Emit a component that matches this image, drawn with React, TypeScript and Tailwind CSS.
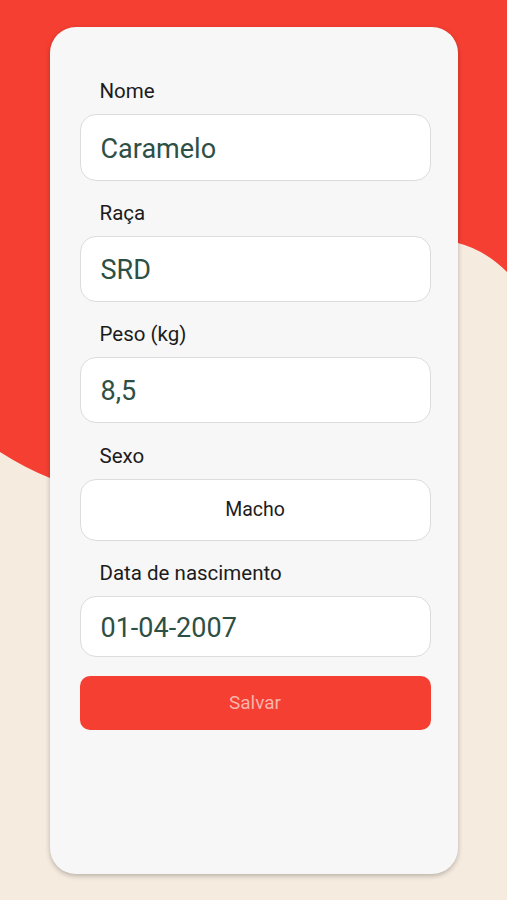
import React from "react";

const font = { fontFamily: "Roboto, 'Noto Sans', sans-serif" };

interface FieldProps {
  label: string;
  value: string;
  boxClass: string;
  center?: boolean;
}

const Field = ({ label, value, boxClass, center }: FieldProps) => {
  return (
    <div className="flex flex-col">
      <label className="ml-5 mb-[11px] text-[20.5px] leading-6 text-[#1c1c1c]">
        {label}
      </label>
      <div
        className={`flex items-center rounded-2xl border border-[#dcdcdc] bg-white ${boxClass} ${
          center ? "justify-center" : "px-5"
        }`}
      >
        {center ? (
          <span className="text-[19.5px] text-[#1c1c1c]">{value}</span>
        ) : (
          <span className="mt-[3px] text-[27px] text-[#2e4f45]">{value}</span>
        )}
      </div>
    </div>
  );
};

export default function App() {
  return (
    <div
      className="relative h-[900px] w-full overflow-hidden bg-[#f6ebdf]"
      style={font}
    >
      <svg
        className="absolute inset-0 h-full w-full"
        viewBox="0 0 507 900"
        preserveAspectRatio="none"
      >
        <path
          d="M0 0 H507 V272 Q485 250 458 243 C380 225 200 330 50 478 Q25 468 0 452 Z"
          fill="#f53f32"
        />
      </svg>
      <div className="relative flex justify-center pt-[27px]">
        <div className="flex h-[847px] w-[408px] flex-col gap-5 rounded-[26px] bg-[#f7f7f7] pl-[30px] pr-[27px] pt-[52px] shadow-[0_2px_5px_rgba(0,0,0,0.25)]">
          <Field label="Nome" value="Caramelo" boxClass="h-[67px]" />
          <Field label="Raça" value="SRD" boxClass="h-[66px]" />
          <Field label="Peso (kg)" value="8,5" boxClass="h-[66px]" />
          <div className="mt-px">
            <Field label="Sexo" value="Macho" boxClass="h-[62px]" center />
          </div>
          <Field label="Data de nascimento" value="01-04-2007" boxClass="h-[61px]" />
          <button className="-mt-px h-[54px] w-full rounded-[10px] bg-[#f53f32] text-[19px] text-[#f9b3aa]">
            Salvar
          </button>
        </div>
      </div>
    </div>
  );
}
